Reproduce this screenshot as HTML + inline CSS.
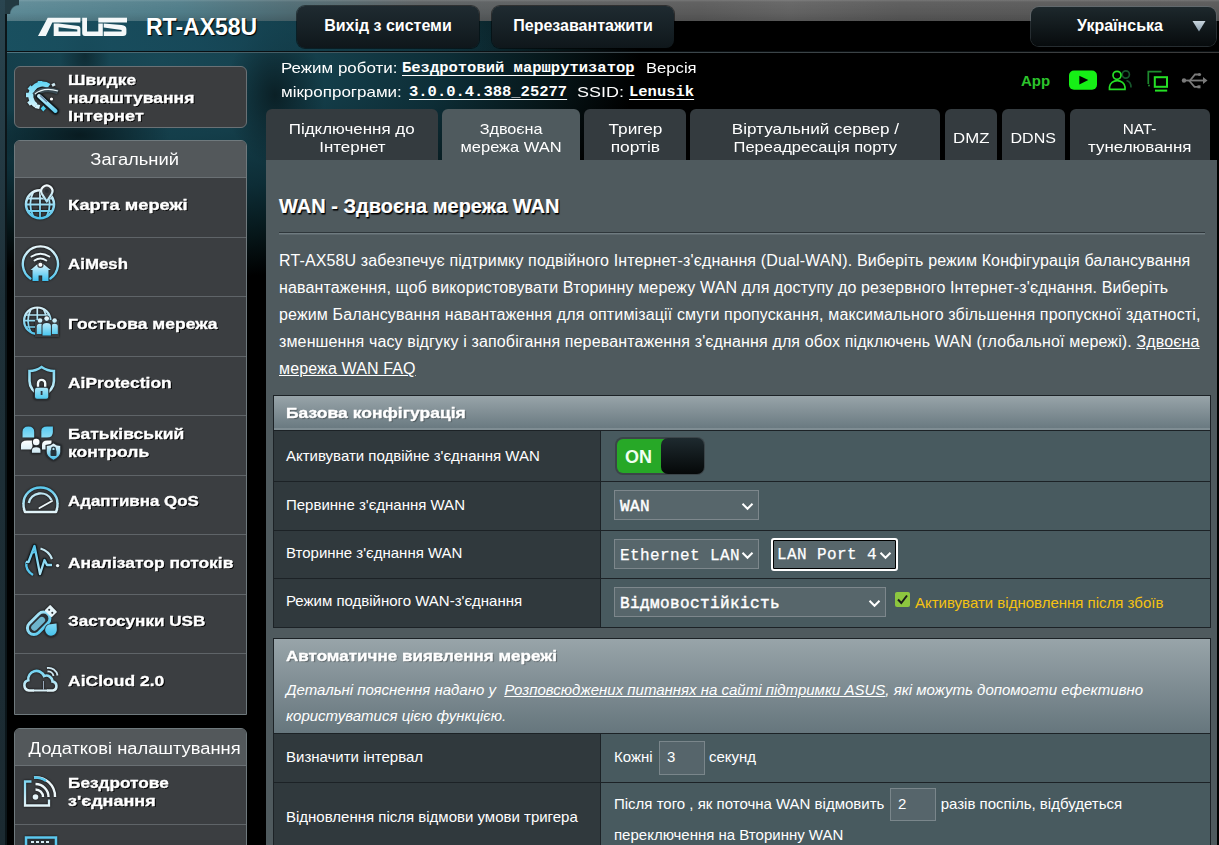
<!DOCTYPE html>
<html><head><meta charset="utf-8">
<style>
*{box-sizing:border-box;margin:0;padding:0}
html,body{width:1219px;height:845px;overflow:hidden;background:#000;font-family:"Liberation Sans",sans-serif;color:#fff}
.abs{position:absolute}
.nw{white-space:nowrap}
#bg{position:absolute;left:0;top:0;width:1219px;height:845px;overflow:hidden}
.hbtn{position:absolute;top:6px;height:42px;border-radius:8px;background:linear-gradient(#1f2b31,#0f171b);box-shadow:0 0 0 1px rgba(0,0,0,.5);font-weight:bold;font-size:16px;text-align:center;line-height:40px;color:#fff}
.sbox{position:absolute;left:14px;width:233px;border:1px solid #6f797d;border-radius:6px;background:#3b3e41;overflow:hidden}
.shead{position:absolute;left:0;top:0;width:100%;height:37px;background:#53585b;border-bottom:1px solid #6a7074}
.sep{position:absolute;left:0;width:100%;height:1px;background:#5f6468}
.mt{position:absolute;left:67.5px;font-weight:bold;font-size:15px;line-height:17px;color:#fff;text-shadow:1px 1px 0 #000;white-space:nowrap;transform-origin:0 0;-webkit-text-stroke:.35px #fff}
.ico{position:absolute}
.st{font-size:15px;line-height:18px;transform-origin:0 0}
.stm{font-family:"Liberation Mono",monospace;font-size:15.5px;line-height:18px;font-weight:bold;text-decoration:underline;text-underline-offset:3px}
.tab{position:absolute;top:109px;height:51px;padding-top:5px;border-radius:6px 6px 0 0;background:#343b3f;text-align:center;font-size:15px;line-height:18px;color:#fff;display:flex;align-items:center;justify-content:center;letter-spacing:.9px;white-space:nowrap}
.tab.on{background:#4f5a5e}
.tt{position:absolute;text-align:center;font-size:15px;line-height:18px;white-space:nowrap;color:#fff}
.tt span{display:inline-block;transform-origin:50% 0}
#panel{position:absolute;left:266px;top:160px;width:951px;height:685px;background:#4f5a5e}
.lbl{position:absolute;left:286px;font-size:15px;line-height:18px;white-space:nowrap}
.sel{position:absolute;-webkit-text-stroke:.25px #fff;letter-spacing:.4px;height:30px;background:#57666b;border:1px solid #7d878c;font-family:"Liberation Mono",monospace;font-size:16px;line-height:32px;padding-left:5px;white-space:nowrap}
.sel svg{position:absolute;right:4px;top:11px}
.inp{position:absolute;background:#56656b;border:1px solid #7a868b;font-size:15px;padding-left:7px;line-height:30px}
</style></head><body>
<div id="bg">
  <div class="abs" style="left:0;top:0;width:1219px;height:845px;background:radial-gradient(ellipse 480px 220px at 160px 60px,#184856 0%,#143e4a 35%,#0d2d36 60%,#061619 82%,#000 100%)"></div>
  <div class="abs" style="left:0;top:0;width:1219px;height:845px;background:radial-gradient(ellipse 90px 40px at 80px 135px,rgba(0,0,0,.55),rgba(0,0,0,0));"></div>
  <div class="abs" style="left:0;top:0;width:1219px;height:845px;background:radial-gradient(ellipse 50px 70px at 275px 95px,rgba(0,0,0,.5),rgba(0,0,0,0));"></div>
  <div class="abs" style="left:0;top:0;width:1219px;height:845px;background:radial-gradient(ellipse 25px 45px at 85px 55px,rgba(0,0,0,.35),rgba(0,0,0,0));"></div>
<div class="abs" style="left:0;top:0;width:1219px;height:51px;background:linear-gradient(90deg,rgba(26,82,98,.9) 0,rgba(23,73,90,.85) 200px,rgba(18,60,72,.6) 330px,rgba(0,0,0,0) 560px)"></div>
  <div class="abs" style="left:0;top:0;width:1219px;height:21px;background:linear-gradient(90deg,#5d8a96 0,#4f7c88 180px,#4d6a72 290px,#595e60 420px,#5a5a5a 700px,#626262 790px,#595959 900px,#575757 1219px)"></div>
  <div class="abs" style="left:0;top:0;width:1219px;height:21px;background:linear-gradient(rgba(255,255,255,.18) 0,rgba(255,255,255,.05) 2px,rgba(0,0,0,0) 60%,rgba(0,0,0,.12))"></div>
  <div class="abs" style="left:6px;top:51px;width:1213px;height:1px;background:#0a0f12"></div>
  <div class="abs" style="left:6px;top:52px;width:1213px;height:1px;background:linear-gradient(90deg,#4e7480,#3c4a50 500px,#3a3a3a)"></div>
  <div class="abs" style="left:0;top:0;width:5px;height:845px;background:linear-gradient(#2a4550,#1e3038 300px,#1b2a31)"></div>
  <div class="abs" style="left:5px;top:0;width:2px;height:845px;background:#0b1519"></div>
  <div class="abs" style="left:5px;top:0;width:10px;height:1px;background:#1c2a30"></div>
  <div class="abs" style="left:5px;top:0;width:14px;height:14px;background:radial-gradient(circle 9px at 14px 14px,rgba(0,0,0,0) 8px,#4f7884 8.5px,#233a42 9.5px)"></div>
</div>

<!-- logo -->
<svg class="abs" style="left:37px;top:17px" width="91" height="20" viewBox="37 17 91 20">
  <g fill="#f4f8f9" fill-rule="evenodd">
    <path d="M38 36 L47.7 17.7 H80.4 V22.5 H52.3 L45.9 36Z"/>
    <path d="M53.7 23.5 H58.6 L78.5 26 Q80.4 26.3 80.4 28.5 V36 H53.7Z M58.6 27.2 L77.3 29.6 V31.6 H58.6Z"/>
    <path d="M82.2 17.7 H87 V31.6 H98.3 V23.5 H102.8 V36 H85 Q82.2 36 82.2 33Z"/>
    <path d="M98.3 17.7 H127 V22.5 H98.3Z"/>
    <path d="M103.7 23.5 L121.5 25 Q126.4 25.4 126.4 29 V33 Q126.4 36 123 36 H103.7 V31.6 H121.6 V30 L103.7 27.6Z"/>
  </g>
</svg>
<div class="abs nw" style="left:146px;top:14px;font-size:23px;line-height:27px;font-weight:bold;color:#fff;text-shadow:1px 1px 1px #000">RT-AX58U</div>

<div class="hbtn" style="left:297px;width:182px">Вихід з системи</div>
<div class="hbtn" style="left:492px;width:182px">Перезавантажити</div>
<div class="hbtn" style="left:1031px;top:7px;height:39px;line-height:37px;width:185px;padding-right:7px;background:linear-gradient(#1d282c,#070b0d);box-shadow:0 0 0 1px rgba(110,130,140,.35)">Українська</div>
<svg class="abs" style="left:1191px;top:19px" width="16" height="14"><defs><linearGradient id="lt" x1="0" y1="0" x2="0" y2="1"><stop offset="0" stop-color="#c8d4dc"/><stop offset="1" stop-color="#8a9eae"/></linearGradient></defs><path d="M1.5 2 H14.5 L8 12.5Z" fill="url(#lt)"/></svg>

<!-- status -->
<div class="abs nw st" style="left:281px;top:59px;transform:scaleX(1.129)">Режим роботи:</div>
<div class="abs nw stm" style="left:402px;top:59px">Бездротовий маршрутизатор</div>
<div class="abs nw st" style="left:646px;top:59px;transform:scaleX(1.109)">Версія</div>
<div class="abs nw st" style="left:281px;top:83px;transform:scaleX(1.132)">мікропрограми:</div>
<div class="abs nw stm" style="left:409px;top:83px">3.0.0.4.388_25277</div>
<div class="abs nw st" style="left:577px;top:83px;transform:scaleX(1.197)">SSID:</div>
<div class="abs nw stm" style="left:629px;top:83px">Lenusik</div>
<!-- status icons -->
<div class="abs nw" style="left:1021px;top:72px;font-size:15px;line-height:17px;font-weight:bold;color:#2cc42c">App</div>
<svg class="abs" style="left:1068px;top:70px" width="30" height="21" viewBox="1068 70 30 21"><rect x="1069" y="70.5" width="28" height="19.2" rx="5" fill="#16f016"/><path d="M1079.3 75.7 L1088.3 80.1 L1079.3 84.5Z" fill="#000"/></svg>
<svg class="abs" style="left:1105px;top:66px" width="110" height="28" viewBox="1105 66 110 28">
  <g fill="none" stroke-width="1.7">
    <circle cx="1125.8" cy="74.5" r="3.6" stroke="#17552c"/>
    <path d="M1126.5 80.5 Q1131 81.5 1131 87.5" stroke="#17552c"/>
    <circle cx="1117" cy="75.3" r="4" stroke="#25e025" fill="#000"/>
    <path d="M1109.5 89.3 V87 A7.8 7.2 0 0 1 1125 87 V89.3Z" stroke="#25e025" fill="#000"/>
    <path d="M1148.3 84 V71.6 H1161.5" stroke="#1e8a2e"/>
    <rect x="1154.8" y="77.2" width="12.2" height="9.6" stroke="#25e025" stroke-width="2" fill="#000"/>
    <path d="M1155 90.6 H1167.2" stroke="#25e025" stroke-width="2"/>
  </g>
  <circle cx="1149" cy="85.5" r="1" fill="#1e8a2e"/>
  <g stroke="#7a7a7a" stroke-width="1.8" fill="none">
    <path d="M1184 80.5 H1204"/>
    <path d="M1190 80.5 L1195 74.5 H1199"/>
    <path d="M1189 80.5 L1194.5 86.8 H1198"/>
  </g>
  <circle cx="1184" cy="80.5" r="2.2" fill="#7a7a7a"/>
  <circle cx="1199.5" cy="74.5" r="1.6" fill="#7a7a7a"/>
  <rect x="1197.5" y="85.3" width="3" height="3" fill="#7a7a7a"/>
  <path d="M1203 77 L1207.5 80.5 L1203 84Z" fill="#7a7a7a"/>
</svg>

<!-- sidebar -->
<div class="sbox" style="top:66px;height:62px;border-color:#6a7175;background:#3b3d3f"></div>
<div class="sbox" style="top:140px;height:575px;border-radius:6px 6px 0 0">
  <div class="shead"></div>
  <div class="abs nw" style="left:0;top:9px;width:100%;padding-left:9px;text-align:center;font-size:16px;line-height:20px"><span style="display:inline-block;transform:scaleX(1.147)">Загальний</span></div>
  <div class="sep" style="top:96px"></div>
  <div class="sep" style="top:155px"></div>
  <div class="sep" style="top:215px"></div>
  <div class="sep" style="top:274px"></div>
  <div class="sep" style="top:334px"></div>
  <div class="sep" style="top:393px"></div>
  <div class="sep" style="top:453px"></div>
  <div class="sep" style="top:512px"></div>
</div>
<div class="sbox" style="top:728px;height:130px;border-radius:6px 6px 0 0">
  <div class="shead"></div>
  <div class="abs nw" style="left:0;top:10px;width:100%;padding-left:9px;text-align:center;font-size:16px;line-height:20px"><span style="display:inline-block;transform:scaleX(1.145)">Додаткові налаштування</span></div>
  <div class="sep" style="top:95px"></div>
</div>
<div class="mt" style="top:71px;transform:scaleX(1.157)">Швидке</div>
<div class="mt" style="top:89px;transform:scaleX(1.17)">налаштування</div>
<div class="mt" style="top:107px;transform:scaleX(1.21)">Інтернет</div>
<div class="mt" style="top:196px;transform:scaleX(1.219)">Карта мережі</div>
<div class="mt" style="top:255px;transform:scaleX(1.125)">AiMesh</div>
<div class="mt" style="top:315px;transform:scaleX(1.166)">Гостьова мережа</div>
<div class="mt" style="top:374px;transform:scaleX(1.163)">AiProtection</div>
<div class="mt" style="top:425px;transform:scaleX(1.166)">Батьківський</div>
<div class="mt" style="top:443px;transform:scaleX(1.166)">контроль</div>
<div class="mt" style="top:492px;transform:scaleX(1.128)">Адаптивна QoS</div>
<div class="mt" style="top:554px;transform:scaleX(1.163)">Аналізатор потоків</div>
<div class="mt" style="top:612px;transform:scaleX(1.14)">Застосунки USB</div>
<div class="mt" style="top:672px;transform:scaleX(1.167)">AiCloud 2.0</div>
<div class="mt" style="top:774px;transform:scaleX(1.149)">Бездротове</div>
<div class="mt" style="top:792px;transform:scaleX(1.2)">з'єднання</div>

<!-- icons --><svg class="abs" style="left:0;top:0;filter:drop-shadow(0 0 .8px rgba(0,0,0,.85))" width="70" height="845" viewBox="0 0 70 845"><defs><linearGradient id="g1" gradientUnits="userSpaceOnUse" x1="0" y1="80" x2="0" y2="113"><stop offset="0" stop-color="#5ad4f4"/><stop offset="1" stop-color="#f0fbff"/></linearGradient><linearGradient id="g1b" gradientUnits="userSpaceOnUse" x1="0" y1="88" x2="0" y2="113"><stop offset="0" stop-color="#f4fbfd"/><stop offset="1" stop-color="#5cd0f4"/></linearGradient><linearGradient id="g2" gradientUnits="userSpaceOnUse" x1="0" y1="188" x2="0" y2="220"><stop offset="0" stop-color="#f2fafc"/><stop offset="1" stop-color="#44bfea"/></linearGradient><linearGradient id="g3" gradientUnits="userSpaceOnUse" x1="0" y1="246" x2="0" y2="282"><stop offset="0" stop-color="#e8f6fa"/><stop offset="1" stop-color="#49c4ee"/></linearGradient><linearGradient id="g3h" gradientUnits="userSpaceOnUse" x1="0" y1="261" x2="0" y2="281"><stop offset="0" stop-color="#f4fbfd"/><stop offset="1" stop-color="#3cc0f0"/></linearGradient><linearGradient id="g4" gradientUnits="userSpaceOnUse" x1="0" y1="306" x2="0" y2="336"><stop offset="0" stop-color="#dff2f8"/><stop offset="1" stop-color="#48c0ea"/></linearGradient><linearGradient id="g4p" gradientUnits="userSpaceOnUse" x1="0" y1="316" x2="0" y2="336"><stop offset="0" stop-color="#f4fbfd"/><stop offset="1" stop-color="#45c6f0"/></linearGradient><linearGradient id="g5" gradientUnits="userSpaceOnUse" x1="0" y1="365" x2="0" y2="399"><stop offset="0" stop-color="#6fd2f0"/><stop offset="1" stop-color="#e6f6fb"/></linearGradient><linearGradient id="g5l" gradientUnits="userSpaceOnUse" x1="0" y1="379" x2="0" y2="399"><stop offset="0" stop-color="#f2fafc"/><stop offset="1" stop-color="#4cc8ee"/></linearGradient><linearGradient id="g6" gradientUnits="userSpaceOnUse" x1="0" y1="426" x2="0" y2="437"><stop offset="0" stop-color="#52c8f0"/><stop offset="1" stop-color="#8adcf4"/></linearGradient><linearGradient id="g6w" gradientUnits="userSpaceOnUse" x1="0" y1="440" x2="0" y2="453"><stop offset="0" stop-color="#ffffff"/><stop offset="1" stop-color="#cfeaf4"/></linearGradient><linearGradient id="g6s" gradientUnits="userSpaceOnUse" x1="0" y1="443" x2="0" y2="460"><stop offset="0" stop-color="#f4fbfd"/><stop offset="1" stop-color="#40bce8"/></linearGradient><linearGradient id="g7" gradientUnits="userSpaceOnUse" x1="0" y1="488" x2="0" y2="513"><stop offset="0" stop-color="#5cc8ec"/><stop offset="1" stop-color="#e8f6fa"/></linearGradient><linearGradient id="g8" gradientUnits="userSpaceOnUse" x1="0" y1="545" x2="0" y2="576"><stop offset="0" stop-color="#52c4ec"/><stop offset="1" stop-color="#b8e8f6"/></linearGradient><linearGradient id="g9" gradientUnits="userSpaceOnUse" x1="0" y1="604" x2="0" y2="636"><stop offset="0" stop-color="#dff4fa"/><stop offset="1" stop-color="#45c4ee"/></linearGradient><linearGradient id="g10" gradientUnits="userSpaceOnUse" x1="0" y1="669" x2="0" y2="692"><stop offset="0" stop-color="#68d0f0"/><stop offset="1" stop-color="#e8f6fa"/></linearGradient><linearGradient id="g11" gradientUnits="userSpaceOnUse" x1="0" y1="776" x2="0" y2="807"><stop offset="0" stop-color="#6ad0f0"/><stop offset="1" stop-color="#e8f6fa"/></linearGradient></defs><g>
<path d="M40 81 L40 85 M29 87 L32 89.5 M26 95 L30 95 M28.5 104 L32 101.5 M37 108.5 L38 104.5" stroke="url(#g1)" stroke-width="4.5"/>
<path d="M49 86 A11 11 0 1 0 36 105.5" stroke="url(#g1)" stroke-width="5" fill="none"/>
<path d="M52 85.5 L55 84" stroke="#cfe9f2" stroke-width="3"/>
<path d="M34 95 Q44 86 58 92" stroke="#3a4a52" stroke-width="5" fill="none"/>
<path d="M35 94 Q44 86.5 58 91" stroke="#e8f4f8" stroke-width="1.3" fill="none"/>
<path d="M39 96 L55.5 111" stroke="#0e1a1f" stroke-width="6.5" stroke-linecap="round"/>
<path d="M39 96 L55.5 111" stroke="url(#g1b)" stroke-width="4" stroke-linecap="round"/>
<path d="M40 95.5 L47 102" stroke="#6a86a8" stroke-width="1.3"/>
<path d="M43.3 105.5 L46 108.5 L43.3 111.5 L40.6 108.5Z" fill="#4cd0f0"/>
<circle cx="51.5" cy="99" r="1.6" fill="#fff"/>
</g>
<g>
<circle cx="40" cy="204.3" r="14" stroke="url(#g2)" stroke-width="2.6" fill="none"/>
<path d="M27 198.5 H53 M26 204.5 H54 M27.5 211 H52.5 M40 190.5 V218 M33.5 191.5 Q27 204 33.5 217 M46.5 191.5 Q53 204 46.5 217" stroke="url(#g2)" stroke-width="1.8" fill="none"/>
<path d="M46.8 203 L40.6 194.5 A7 7 0 1 1 53 194.5 Z" fill="#3a3d40"/>
<path d="M46.8 201.5 L42 194 A5.6 5.6 0 1 1 51.6 194 Z" stroke="url(#g2)" stroke-width="2.2" fill="#3a3d40" stroke-linejoin="round"/>
<circle cx="46.8" cy="191" r="2" fill="#2a3035"/>
</g>
<g>
<path d="M30.4 278.5 A17.6 17.6 0 1 1 50.4 278.5" stroke="url(#g3)" stroke-width="2.4" fill="none" stroke-linecap="round"/>
<path d="M31.5 256.5 Q40.4 251 49.3 256.5" stroke="#eaf6fa" stroke-width="2" fill="none" stroke-linecap="round"/>
<path d="M34.5 260.5 Q40.4 256.5 46.3 260.5" stroke="#eaf6fa" stroke-width="2" fill="none" stroke-linecap="round"/>
<path d="M30.5 270 L40.4 261.5 L50.7 270 L48.5 270 L48.5 281 L42.2 281 L42.2 275.5 L38.6 275.5 L38.6 281 L32.5 281 L32.5 270Z" fill="url(#g3h)"/>
<circle cx="40.4" cy="264.8" r="3.2" fill="#3a3d40"/>
<circle cx="40.4" cy="264.8" r="2" fill="#fff"/>
</g>
<g>
<circle cx="37.3" cy="320.7" r="13.2" stroke="url(#g4)" stroke-width="2.2" fill="none"/>
<path d="M25 315 H49.5 M24.5 320.7 H50 M25 327 H49.5 M37.3 308 V333.5 M31 309 Q25 320.7 31 332.5 M43.6 309 Q49.6 320.7 43.6 332.5" stroke="url(#g4)" stroke-width="1.7" fill="none"/>
<path d="M35 320 H59 V337 H35Z" fill="#3a3d40"/>
<circle cx="40" cy="320.5" r="2.3" fill="url(#g4p)"/>
<path d="M36.8 334 V326.5 Q36.8 323.8 40 323.8 Q43.2 323.8 43.2 326.5 V334Z" fill="url(#g4p)"/>
<circle cx="54.6" cy="320.5" r="2.3" fill="url(#g4p)"/>
<path d="M51.4 334 V326.5 Q51.4 323.8 54.6 323.8 Q57.8 323.8 57.8 326.5 V334Z" fill="url(#g4p)"/>
<circle cx="46.7" cy="318.6" r="3" fill="#2a3035"/>
<circle cx="46.7" cy="318.6" r="2.4" fill="url(#g4p)"/>
<path d="M41.5 336 V325.5 Q41.5 322 46.7 322 Q51.9 322 51.9 325.5 V336Z" fill="#2a3035"/>
<path d="M42.5 335.5 V326 Q42.5 323 46.7 323 Q50.9 323 50.9 326 V335.5Z" fill="url(#g4p)"/>
</g>
<g>
<path d="M41.6 367 C37.5 369.8 33.5 371 29.5 371 V381 C29.5 388.5 34.5 393 41.6 396.5 C48.7 393 53.9 388.5 53.9 381 V371 C49.7 371 45.7 369.8 41.6 367Z" stroke="url(#g5)" stroke-width="2.6" fill="none"/>
<path d="M38 388 V383.5 A3.6 3.6 0 0 1 45.2 383.5 V388" stroke="#f2fafc" stroke-width="2.4" fill="none"/>
<rect x="33.8" y="386.8" width="15.6" height="13" rx="2.5" fill="#2a3035"/>
<rect x="35" y="387.8" width="13.2" height="11" rx="2" fill="url(#g5l)"/>
<path d="M41.6 391 V395" stroke="#2a3540" stroke-width="1.8"/>
</g>
<g>
<path d="M22.5 437.5 V432 Q22.5 426.5 28.4 426.5 Q34.2 426.5 34.2 432 V437.5Z" fill="url(#g6)"/>
<path d="M41.3 437.5 V431 Q41.3 426.5 47 426.5 H52.9 V432 Q52.9 437.5 47 437.5Z" fill="url(#g6)"/>
<path d="M21 449.5 V445 Q21 440.5 27 440.5 H32.5 V449.5Z" fill="url(#g6w)"/>
<path d="M42 449.5 V445 Q42 440.5 47 440.5 H51.5 V449.5Z" fill="url(#g6w)"/>
<circle cx="36.2" cy="442" r="4.4" fill="#2a3035"/>
<circle cx="36.2" cy="442" r="3.3" fill="url(#g6w)"/>
<path d="M31 453.5 V450.5 Q31 446.2 36.2 446.2 Q41.4 446.2 41.4 450.5 V453.5Z" fill="#2a3035"/>
<path d="M32 452.8 V450.5 Q32 447.2 36.2 447.2 Q40.4 447.2 40.4 450.5 V452.8Z" fill="url(#g6w)"/>
<path d="M53.5 442 Q50 445 45.5 445 V452 Q45.5 457.5 53.5 461 Q61.5 457.5 61.5 452 V445 Q57 445 53.5 442Z" fill="#2a3035"/>
<path d="M53.5 443.5 Q50.3 446 46.8 446 V452 Q46.8 456.5 53.5 459.8 Q60.2 456.5 60.2 452 V446 Q56.7 446 53.5 443.5Z" fill="url(#g6s)"/>
<rect x="50.5" y="450" width="6" height="6" rx="1" fill="#25333b"/>
<path d="M51.8 450.5 V448.8 A1.7 1.7 0 0 1 55.2 448.8 V450.5" stroke="#25333b" stroke-width="1.4" fill="none"/>
</g>
<g>
<path d="M25 512 Q23 507 23.5 503.5 A17 16 0 0 1 57.5 503.5 Q58 507 56 512 Z" stroke="url(#g7)" stroke-width="2.5" fill="none" stroke-linejoin="round"/>
<path d="M28.8 503 A12 11.5 0 0 1 51.5 500" stroke="#bfe6f3" stroke-width="2.4" fill="none"/>
<path d="M39.5 508 L52 501" stroke="#eef7fa" stroke-width="2" stroke-linecap="round"/>
</g>
<g>
<path d="M26.5 562 Q25 570 33 575" stroke="#55c6ee" stroke-width="2.4" fill="none"/>
<path d="M40.5 548.5 Q49 551 52 559" stroke="#c5e8f3" stroke-width="2.2" fill="none"/>
<path d="M26 562 H28.5 L34.5 546 L40 574 L44.5 560 L47 565 H52" stroke="#0e1a1f" stroke-width="4" fill="none" stroke-linejoin="round"/>
<path d="M26 562 H28.5 L34.5 546 L40 574 L44.5 560 L47 565 H52" stroke="url(#g8)" stroke-width="2.3" fill="none" stroke-linejoin="round"/>
<path d="M33 553 L35.5 551.5" stroke="#55c6ee" stroke-width="2"/>
<circle cx="57.6" cy="565.6" r="1.7" fill="#eef7fa"/>
</g>
<g>
<g transform="rotate(-45 38.5 623.5)">
<rect x="25.5" y="617" width="26.5" height="13" rx="6.5" stroke="url(#g9)" stroke-width="3" fill="#2a3035"/>
<rect x="29.5" y="620.3" width="17" height="6.4" rx="3.2" fill="#7ed6f2" opacity=".8"/>
<rect x="52" y="618.5" width="8" height="10" rx="1" fill="#e6f5fa"/>
<circle cx="55.8" cy="621.3" r="1" fill="#2a3035"/><circle cx="55.8" cy="625.7" r="1" fill="#2a3035"/>
</g>
<path d="M57.5 622.5 L57.8 629.5 A6.8 6.8 0 1 1 48 624 Z" fill="#2a3035"/>
<path d="M56.5 623.5 L56.8 629.3 A5.8 5.8 0 1 1 48.6 624.6 Z" fill="url(#g9)"/>
</g>
<g>
<path d="M33 690.5 H29 A5.2 5.2 0 0 1 28.3 680.3 A8.2 8.2 0 0 1 44 676 A6.2 6.2 0 0 1 52.5 681.5 A4.6 4.6 0 0 1 53 690.5 H48" stroke="url(#g10)" stroke-width="2.6" fill="none" stroke-linecap="round"/>
<path d="M33 690.5 H48" stroke="#d8eff6" stroke-width="2"/>
<path d="M43.5 681 V690" stroke="#9ab" stroke-width="1"/>
<path d="M47 668 A9 9 0 0 1 57.5 675.5 M47.5 671.5 A5.5 5.5 0 0 1 53.5 676" stroke="#cfe8f2" stroke-width="1.8" fill="none"/>
</g>
<g>
<path d="M31.5 781.5 H25 V805.5 H49 V799.5" stroke="url(#g11)" stroke-width="2.3" fill="none"/>
<circle cx="35.5" cy="797" r="2.8" fill="#e6f5fa"/>
<path d="M35.5 789.5 A7.5 7.5 0 0 1 43 797 M35.5 784 A13 13 0 0 1 48.5 797 M34 777.5 A19 19 0 0 1 55 797" stroke="#eef7fa" stroke-width="2.4" fill="none"/>
<path d="M34 777.5 A19 19 0 0 1 46 781" stroke="#58c8ee" stroke-width="2.4" fill="none"/>
</g>
<g>
<rect x="26" y="837.5" width="30" height="14" stroke="#5cc8ee" stroke-width="2.5" fill="#2a3035"/>
<path d="M31 842 H34 M36 842 H39 M41 842 H44 M46 842 H49" stroke="#d8eef6" stroke-width="2"/>
</g></svg><!-- /icons -->
<!-- tabs -->
<div class="tab" style="left:266px;width:172px"></div>
<div class="tt" style="left:266px;width:172px;top:120px"><span style="transform:scaleX(1.13)">Підключення до</span><br><span style="transform:scaleX(1.128)">Інтернет</span></div>
<div class="tab on" style="left:442px;width:138px"></div>
<div class="tt" style="left:442px;width:138px;top:120px"><span style="transform:scaleX(1.081)">Здвоєна</span><br><span style="transform:scaleX(1.098)">мережа WAN</span></div>
<div class="tab" style="left:584px;width:102px"></div>
<div class="tt" style="left:584px;width:102px;top:120px"><span style="transform:scaleX(1.148)">Тригер</span><br><span style="transform:scaleX(1.158)">портів</span></div>
<div class="tab" style="left:690px;width:250px"></div>
<div class="tt" style="left:690px;width:250px;top:120px"><span style="transform:scaleX(1.139)">Віртуальний сервер /</span><br><span style="transform:scaleX(1.1)">Переадресація порту</span></div>
<div class="tab" style="left:945px;width:52px"></div>
<div class="tt" style="left:945px;width:52px;top:129px"><span style="transform:scaleX(1.119)">DMZ</span></div>
<div class="tab" style="left:1002px;width:63px"></div>
<div class="tt" style="left:1002px;width:63px;top:129px"><span style="transform:scaleX(1.07)">DDNS</span></div>
<div class="tab" style="left:1070px;width:140px"></div>
<div class="tt" style="left:1070px;width:140px;top:120px"><span style="transform:scaleX(1.02)">NAT-</span><br><span style="transform:scaleX(1.131)">тунелювання</span></div>

<div id="panel"></div>

<div class="abs nw" style="left:279px;top:194px;font-size:20px;line-height:25px;font-weight:bold;text-shadow:1px 1px 0 #000,1px 1.5px 1px rgba(0,0,0,.6);-webkit-text-stroke:.2px #fff">WAN - Здвоєна мережа WAN</div>
<div class="abs" style="left:279px;top:232px;width:926px;height:1px;background:#2f373b"></div>
<div class="abs" style="left:279px;top:233px;width:926px;height:1px;background:#6f7b80"></div><div class="abs" style="left:279px;top:234px;width:926px;height:1px;background:#5d686d"></div>

<div class="abs nw" style="left:279px;top:247px;font-size:16px;line-height:27px;letter-spacing:.135px">RT-AX58U забезпечує підтримку подвійного Інтернет-з'єднання (Dual-WAN). Виберіть режим Конфігурація балансування<br>навантаження, щоб використовувати Вторинну мережу WAN для доступу до резервного Інтернет-з'єднання. Виберіть<br>режим Балансування навантаження для оптимізації смуги пропускання, максимального збільшення пропускної здатності,<br>зменшення часу відгуку і запобігання перевантаження з'єднання для обох підключень WAN (глобальної мережі). <u>Здвоєна</u><br><u>мережа WAN FAQ</u></div>

<!-- table 1 -->
<div class="abs" style="left:273px;top:395px;width:938px;height:233px;background:#1c2226"></div>
<div class="abs" style="left:274px;top:396px;width:936px;height:34px;background:linear-gradient(#98a4a9,#6a7a81 94%,#7f8d93 95%)"></div>
<div class="abs nw" style="left:286px;top:404px;font-size:15px;line-height:18px;font-weight:bold;transform:scaleX(1.168);transform-origin:0 0;text-shadow:1px 1px 1px rgba(0,0,0,.35);-webkit-text-stroke:.35px #fff">Базова конфігурація</div>
<div class="abs" style="left:274px;top:431px;width:326px;height:50px;background:#30393d"></div>
<div class="abs" style="left:601px;top:431px;width:609px;height:50px;background:#485a5f"></div>
<div class="abs" style="left:274px;top:482px;width:326px;height:48px;background:#30393d"></div>
<div class="abs" style="left:601px;top:482px;width:609px;height:48px;background:#485a5f"></div>
<div class="abs" style="left:274px;top:531px;width:326px;height:47px;background:#30393d"></div>
<div class="abs" style="left:601px;top:531px;width:609px;height:47px;background:#485a5f"></div>
<div class="abs" style="left:274px;top:579px;width:326px;height:48px;background:#30393d"></div>
<div class="abs" style="left:601px;top:579px;width:609px;height:48px;background:#485a5f"></div>
<div class="lbl" style="top:447px">Активувати подвійне з'єднання WAN</div>
<div class="lbl" style="top:496px">Первинне з'єднання WAN</div>
<div class="lbl" style="top:544px">Вторинне з'єднання WAN</div>
<div class="lbl" style="top:592px">Режим подвійного WAN-з'єднання</div>

<!-- toggle -->
<div class="abs" style="left:615px;top:437px;width:90px;height:38px;border-radius:8px;background:#3b4549"></div>
<div class="abs" style="left:617px;top:439px;width:56px;height:34px;border-radius:6px 0 0 6px;background:#27a827"></div>
<div class="abs nw" style="left:625px;top:447px;font-size:18px;font-weight:bold;line-height:20px;color:#f0fff0">ON</div>
<div class="abs" style="left:661px;top:438px;width:43px;height:36px;border-radius:7px;background:linear-gradient(#1e2a2f,#050808)"></div>

<div class="sel" style="left:614px;top:490px;width:145px;-webkit-text-stroke:.45px #fff">WAN<svg width="13" height="9"><path d="M1.5 1.8 L6.5 6.8 L11.5 1.8" stroke="#fff" stroke-width="2" fill="none"/></svg></div>
<div class="sel" style="left:614px;top:539px;width:145px">Ethernet LAN<svg width="13" height="9"><path d="M1.5 1.8 L6.5 6.8 L11.5 1.8" stroke="#fff" stroke-width="2" fill="none"/></svg></div>
<div class="sel" style="left:771px;top:538px;width:127px;height:33px;border:2px solid #fff;border-radius:3px;box-shadow:inset 0 0 0 1px #000;line-height:31px;padding-left:4px">LAN Port 4<svg width="13" height="9"><path d="M1.5 1.8 L6.5 6.8 L11.5 1.8" stroke="#fff" stroke-width="2" fill="none"/></svg></div>
<div class="sel" style="left:614px;top:587px;width:272px;-webkit-text-stroke:.45px #fff">Відмовостійкість<svg width="13" height="9"><path d="M1.5 1.8 L6.5 6.8 L11.5 1.8" stroke="#fff" stroke-width="2" fill="none"/></svg></div>
<svg class="abs" style="left:895px;top:592px" width="15" height="15"><rect width="15" height="15" rx="2" fill="#8dc63f"/><path d="M3 7.5 L6.3 11 L12 3.5" stroke="#1a1a1a" stroke-width="2" fill="none"/></svg>
<div class="abs nw" style="left:915px;top:594px;font-size:15px;line-height:18px;color:#f5c211">Активувати відновлення після збоїв</div>

<!-- table 2 -->
<div class="abs" style="left:273px;top:638px;width:938px;height:210px;background:#1c2226"></div>
<div class="abs" style="left:274px;top:639px;width:936px;height:94px;background:linear-gradient(#98a4a9,#66767d)"></div>
<div class="abs nw" style="left:286px;top:647px;font-size:15px;line-height:18px;font-weight:bold;transform:scaleX(1.136);transform-origin:0 0;text-shadow:1px 1px 1px rgba(0,0,0,.35);-webkit-text-stroke:.35px #fff">Автоматичне виявлення мережі</div>
<div class="abs nw" style="left:286px;top:677px;font-size:15px;line-height:26px;font-style:italic">Детальні пояснення надано у&nbsp; <u>Розповсюджених питаннях на сайті підтримки ASUS</u>, які можуть допомогти ефективно<br>користуватися цією функцією.</div>
<div class="abs" style="left:274px;top:734px;width:326px;height:48px;background:#30393d"></div>
<div class="abs" style="left:601px;top:734px;width:609px;height:48px;background:#485a5f"></div>
<div class="abs" style="left:274px;top:783px;width:326px;height:70px;background:#30393d"></div>
<div class="abs" style="left:601px;top:783px;width:609px;height:70px;background:#485a5f"></div>
<div class="lbl" style="top:748px">Визначити інтервал</div>
<div class="lbl" style="top:808px">Відновлення після відмови умови тригера</div>
<div class="abs nw" style="left:614px;top:748px;font-size:15px;line-height:18px">Кожні</div>
<div class="inp" style="left:659px;top:741px;width:46px;height:34px">3</div>
<div class="abs nw" style="left:709px;top:748px;font-size:15px;line-height:18px">секунд</div>
<div class="abs nw" style="left:614px;top:789px;font-size:15px;line-height:30.7px">Після того , як поточна WAN відмовить <span style="display:inline-block;width:48px"></span> разів поспіль, відбудеться<br>переключення на Вторинну WAN</div>
<div class="inp" style="left:890px;top:788px;width:46px;height:33px">2</div>

</body></html>
